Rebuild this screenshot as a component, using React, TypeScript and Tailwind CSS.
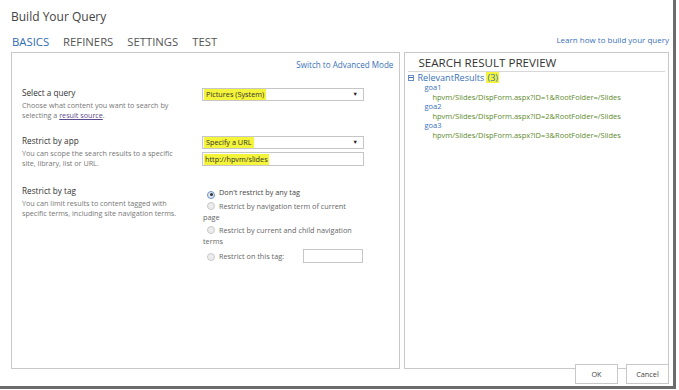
import React from 'react'

const font = { fontFamily: '"Open Sans", "Noto Sans", sans-serif' }

function Select({ value }: { value: string }) {
  return (
    <div className="flex h-[13px] w-[162px] items-center justify-between border border-[#c6c6c6] bg-white pl-[1px] pr-[5px]">
      <span className="bg-[#f4f43a] px-[2px] text-[7.3px] leading-[11px] text-[#333]">{value}</span>
      <span className="text-[5.5px] leading-none text-[#222]">▼</span>
    </div>
  )
}

function Radio({ checked }: { checked?: boolean }) {
  return (
    <span
      className={
        'mr-[4px] inline-flex h-[8px] w-[8px] translate-y-[1px] items-center justify-center rounded-full border ' +
        (checked ? 'border-[#6a8fc0] bg-[#dfe9f7]' : 'border-[#c8c8c8] bg-[#ececec]')
      }
    >
      {checked && <span className="h-[3px] w-[3px] rounded-full bg-[#333]" />}
    </span>
  )
}

function Section({ title, desc, children }: { title: string; desc: React.ReactNode; children: React.ReactNode }) {
  return (
    <div className="flex">
      <div className="w-[180px] shrink-0">
        <div className="text-[8.2px] leading-[12px] text-[#333]">{title}</div>
        <div className="mt-[1px] w-[162px] text-[7.2px] leading-[10px] text-[#777]">{desc}</div>
      </div>
      <div>{children}</div>
    </div>
  )
}

function Result({ name, id }: { name: string; id: number }) {
  return (
    <div className="pl-[16px]">
      <div className="text-[7.5px] leading-[9.5px] text-[#3a72b8]">{name}</div>
      <div className="pl-[8px] text-[7.5px] leading-[9.5px] text-[#5d8a2c]">
        hpvm/Slides/DispForm.aspx?ID={id}&amp;RootFolder=/Slides
      </div>
    </div>
  )
}

export default function App() {
  return (
    <div className="h-[390px] w-[679px] bg-white" style={font}>
      <div className="h-[389px] w-[676px] border-r-[3px] border-b-[3px] border-[#6b6b6b] pl-[11px] pr-[4px]">
        <div className="pt-[9px] text-[12px] leading-[16px] text-[#444]">Build Your Query</div>

        <div className="mt-[10px] flex h-[14px] items-start justify-between">
          <div className="flex gap-[14px] pl-[1px] text-[11.3px] leading-[14px] text-[#555]">
            <span className="text-[#2f6db3]">BASICS</span>
            <span>REFINERS</span>
            <span>SETTINGS</span>
            <span>TEST</span>
          </div>
          <span className="text-[8px] leading-[10px] text-[#3a72b8]">Learn how to build your query</span>
        </div>

        <div className="mt-[3px] flex gap-[4px]">
          <div className="h-[317px] w-[390px] border border-[#c8c8c8] pl-[10px] pr-[6px]">
            <div className="pt-[6px] text-right text-[8.1px] leading-[11px] text-[#3a72b8]">Switch to Advanced Mode</div>

            <div className="mt-[17px]">
              <Section
                title="Select a query"
                desc={
                  <>
                    Choose what content you want to search by selecting a{' '}
                    <span className="text-[#5a4a8c] underline">result source</span>.
                  </>
                }
              >
                <div className="pt-[1px]">
                  <Select value="Pictures (System)" />
                </div>
              </Section>
            </div>

            <div className="mt-[15px]">
              <Section title="Restrict by app" desc="You can scope the search results to a specific site, library, list or URL.">
                <div className="pt-[1px]">
                  <Select value="Specify a URL" />
                  <div className="mt-[3px] flex h-[14px] w-[162px] items-center border border-[#c6c6c6] pl-[1px]">
                    <span className="bg-[#f4f43a] px-[1px] text-[7.3px] leading-[11px] text-[#333]">http://hpvm/slides</span>
                  </div>
                </div>
              </Section>
            </div>

            <div className="mt-[17px]">
              <Section
                title="Restrict by tag"
                desc="You can limit results to content tagged with specific terms, including site navigation terms."
              >
                <div className="w-[152px] pl-[1px] pt-[2px] text-[7.3px] leading-[11px] text-[#666]">
                  <div className="pl-[4px] text-[#444]">
                    <Radio checked />
                    Don't restrict by any tag
                  </div>
                  <div className="mt-[3px]">
                    <span className="pl-[4px]" />
                    <Radio />
                    Restrict by navigation term of current page
                  </div>
                  <div className="mt-[2px]">
                    <span className="pl-[4px]" />
                    <Radio />
                    Restrict by current and child navigation terms
                  </div>
                  <div className="mt-[2px] flex w-[160px] items-center whitespace-nowrap pl-[4px]">
                    <Radio />
                    <span>Restrict on this tag:</span>
                    <span className="ml-auto h-[14px] w-[60px] border border-[#c6c6c6]" />
                  </div>
                </div>
              </Section>
            </div>
          </div>

          <div className="h-[317px] w-[265px] border border-[#c8c8c8] px-[3px]">
            <div className="border-b border-[#d8d8d8] pl-[10px] pt-[2px] text-[11.6px] leading-[16px] text-[#333]">
              SEARCH RESULT PREVIEW
            </div>
            <div className="flex items-center text-[9.1px] leading-[11px] text-[#3a72b8]">
              <span className="mr-[3px] flex h-[6px] w-[6px] items-center justify-center border border-[#6a8fc0]">
                <span className="h-[1px] w-[4px] bg-[#3a72b8]" />
              </span>
              RelevantResults
              <span className="ml-[2px] bg-[#f4f43a] px-[1px] text-[#3a72b8]">(3)</span>
            </div>
            <Result name="goa1" id={1} />
            <Result name="goa2" id={2} />
            <Result name="goa3" id={3} />
          </div>
        </div>

        <div className="relative -mt-[5px] flex justify-end gap-[8px]">
          <button className="h-[20px] w-[43px] border border-[#c8c8c8] bg-white text-[7.3px] text-[#444]">OK</button>
          <button className="h-[20px] w-[43px] border border-[#c8c8c8] bg-white text-[7.3px] text-[#444]">Cancel</button>
        </div>
      </div>
    </div>
  )
}
